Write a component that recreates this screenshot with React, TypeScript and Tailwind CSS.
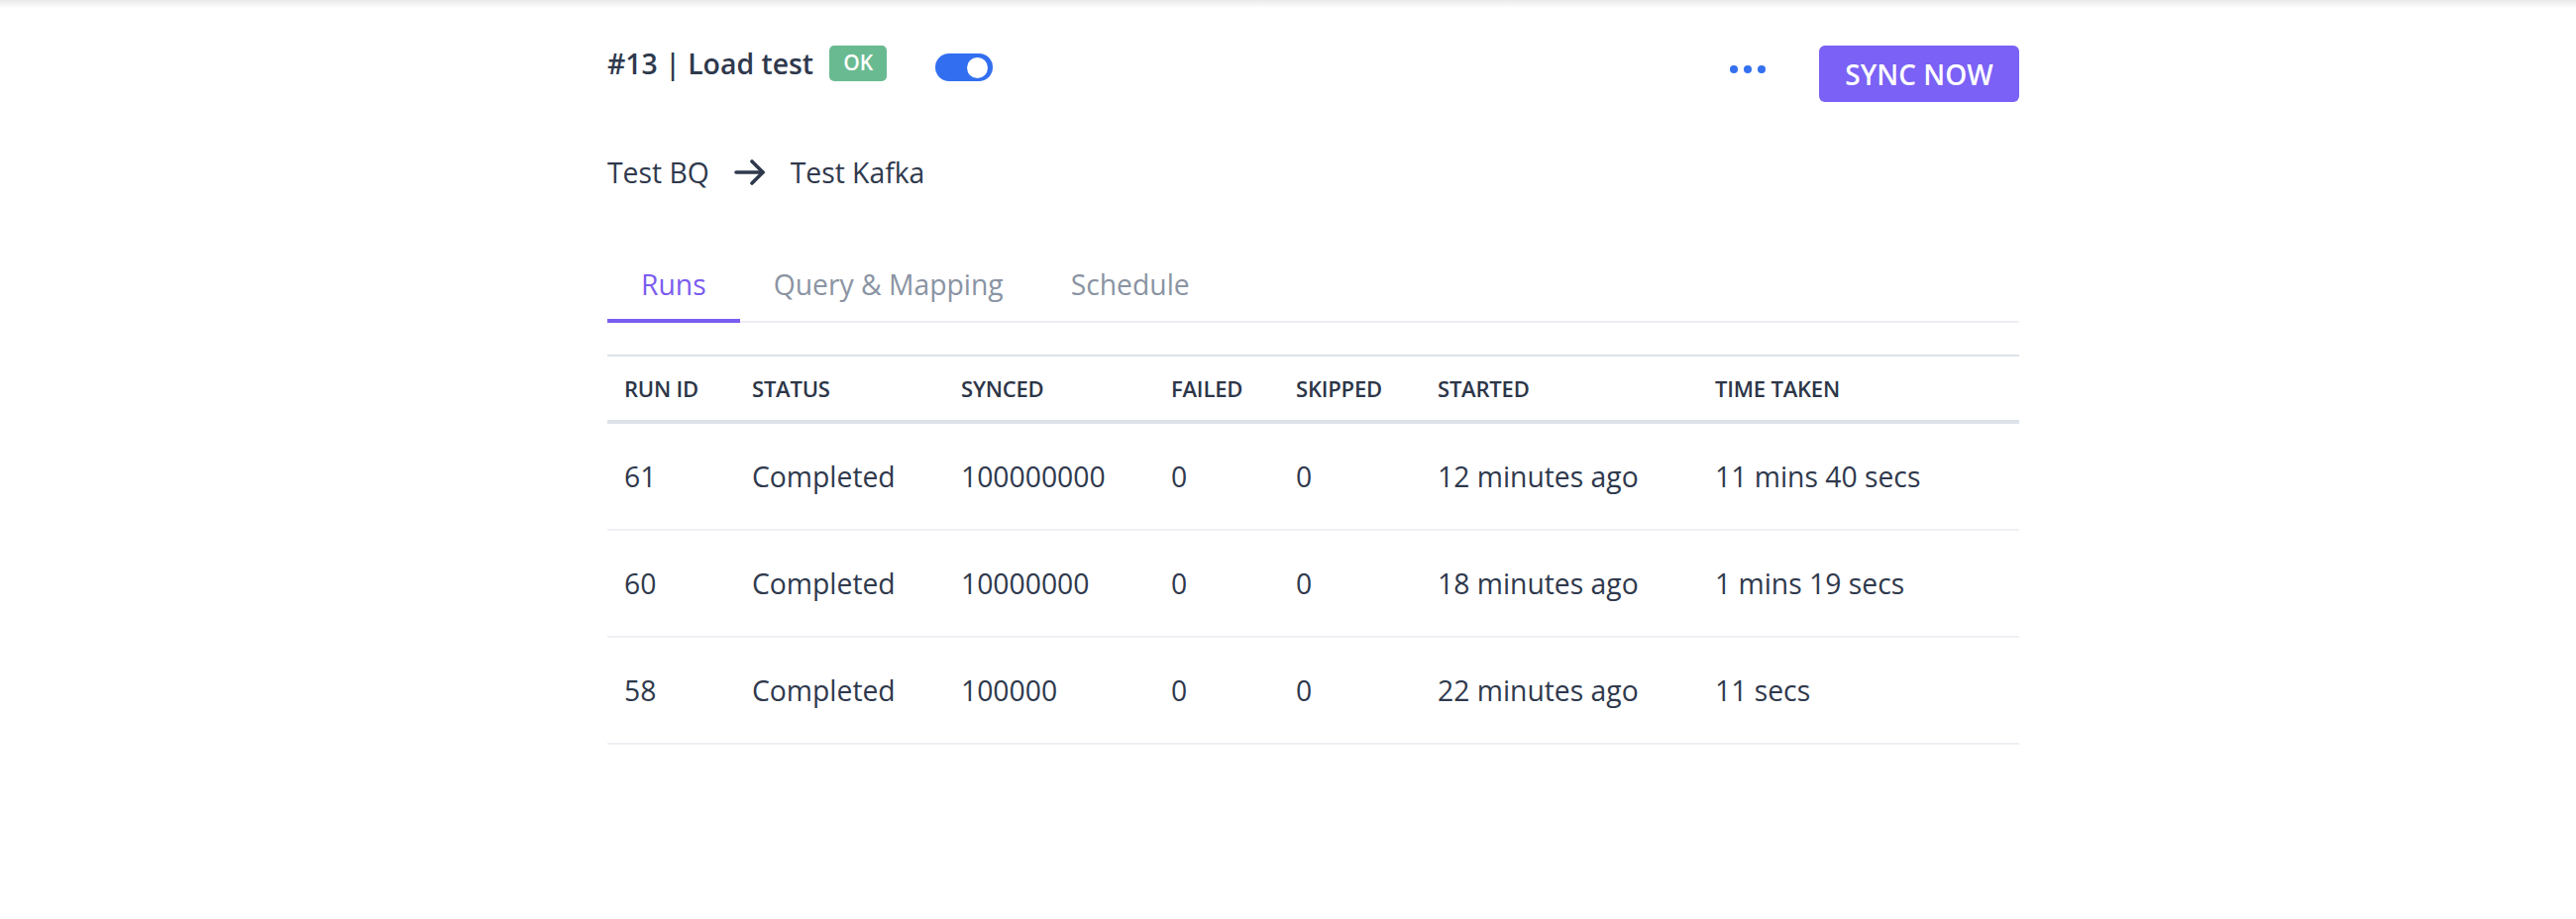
import React from "react";

const rows = [
  { id: "61", status: "Completed", synced: "100000000", failed: "0", skipped: "0", started: "12 minutes ago", taken: "11 mins 40 secs" },
  { id: "60", status: "Completed", synced: "10000000", failed: "0", skipped: "0", started: "18 minutes ago", taken: "1 mins 19 secs" },
  { id: "58", status: "Completed", synced: "100000", failed: "0", skipped: "0", started: "22 minutes ago", taken: "11 secs" },
];

const headers = ["RUN ID", "STATUS", "SYNCED", "FAILED", "SKIPPED", "STARTED", "TIME TAKEN"];

export default function App() {
  return (
    <div className="min-h-screen w-full bg-white text-[#2f394d]" style={{ fontFamily: '"Open Sans", "Noto Sans", sans-serif' }}>
      <div className="h-[8px] w-full bg-linear-to-b from-[#e9e9e9] to-white" />
      <div className="ml-[613px] w-[1425px]">
        {/* Header */}
        <div className="flex items-start justify-between pt-[38px]">
          <div className="flex items-center">
            <span className="text-[28.4px] font-semibold leading-[36px] text-[#2f394d]">#13 | Load test</span>
            <span className="ml-[16px] flex h-[36px] w-[58px] items-center justify-center rounded-[5px] bg-[#6aba91] text-[21px] font-semibold text-white">
              OK
            </span>
            <span className="ml-[49px] mt-[8px] flex h-[28px] w-[58px] items-center justify-end rounded-full bg-[#326ff0] pr-[5px]">
              <span className="h-[21px] w-[21px] rounded-full bg-white" />
            </span>
          </div>
          <div className="flex items-center">
            <div className="mb-[10px] flex items-center gap-[6px]">
              <span className="h-[8px] w-[8px] rounded-full bg-[#3470ef]" />
              <span className="h-[8px] w-[8px] rounded-full bg-[#3470ef]" />
              <span className="h-[8px] w-[8px] rounded-full bg-[#3470ef]" />
            </div>
            <button className="ml-[54px] flex h-[57px] w-[202px] items-center justify-center rounded-[6px] bg-[#7b61f5] text-[28px] font-semibold text-white">
              SYNC NOW
            </button>
          </div>
        </div>

        {/* Source -> Destination */}
        <div className="mt-[52px] flex items-center text-[28.3px] leading-[38px] text-[#2f394d]">
          <span>Test BQ</span>
          <svg className="ml-[25px] mr-[25px]" width="32" height="28" viewBox="0 0 32 28" fill="none" stroke="#2f394d" strokeWidth="3.6" strokeLinecap="round" strokeLinejoin="round">
            <path d="M2 14 H29" />
            <path d="M18 3 L29 14 L18 25" />
          </svg>
          <span>Test Kafka</span>
        </div>

        {/* Tabs */}
        <div className="mt-[75px] flex border-b-2 border-[#eeeef4]">
          <div className="-mb-[2px] border-b-4 border-[#7b5cf0] px-[34px] pb-[16px] text-[28.3px] leading-[38px] text-[#7b5cf0]">Runs</div>
          <div className="-mb-[2px] border-b-4 border-transparent px-[34px] pb-[16px] text-[28.3px] leading-[38px] text-[#8a94a3]">Query &amp; Mapping</div>
          <div className="-mb-[2px] border-b-4 border-transparent px-[34px] pb-[16px] text-[28.3px] leading-[38px] text-[#8a94a3]">Schedule</div>
        </div>

        {/* Table */}
        <div className="mt-[32px] border-t-2 border-[#dde1ea]">
          <div className="grid h-[68px] grid-cols-[129px_211px_212px_126px_143px_280px_324px] items-center border-b-4 border-[#dde2ea]">
            {headers.map((h) => (
              <div key={h} className="pl-[17px] text-[22px] font-semibold tracking-[-0.2px] text-[#2d3648]">
                {h}
              </div>
            ))}
          </div>
          {rows.map((r) => (
            <div key={r.id} className="grid h-[108px] grid-cols-[129px_211px_212px_126px_143px_280px_324px] items-center border-b-2 border-[#eef0f4] text-[28.3px] text-[#2f394d]">
              <div className="pl-[17px]">{r.id}</div>
              <div className="pl-[17px]">{r.status}</div>
              <div className="pl-[17px]">{r.synced}</div>
              <div className="pl-[17px]">{r.failed}</div>
              <div className="pl-[17px]">{r.skipped}</div>
              <div className="pl-[17px]">{r.started}</div>
              <div className="pl-[17px]">{r.taken}</div>
            </div>
          ))}
        </div>
      </div>
    </div>
  );
}
